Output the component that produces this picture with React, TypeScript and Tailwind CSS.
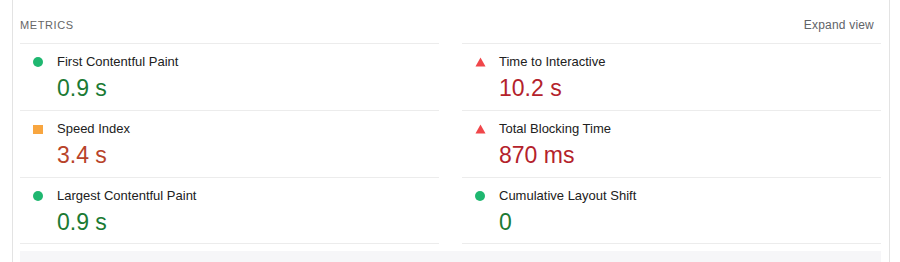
type Rating = "pass" | "average" | "fail";

interface Metric {
  label: string;
  value: string;
  rating: Rating;
}

const metrics: Metric[] = [
  { label: "First Contentful Paint", value: "0.9 s", rating: "pass" },
  { label: "Time to Interactive", value: "10.2 s", rating: "fail" },
  { label: "Speed Index", value: "3.4 s", rating: "average" },
  { label: "Total Blocking Time", value: "870 ms", rating: "fail" },
  { label: "Largest Contentful Paint", value: "0.9 s", rating: "pass" },
  { label: "Cumulative Layout Shift", value: "0", rating: "pass" },
];

const valueColor: Record<Rating, string> = {
  pass: "text-[#1b7a34]",
  average: "text-[#b8432a]",
  fail: "text-[#b4222b]",
};

function RatingIcon({ rating }: { rating: Rating }) {
  if (rating === "pass") {
    return <span className="block h-[10px] w-[10px] rounded-full bg-[#1fb770]" />;
  }
  if (rating === "average") {
    return <span className="block h-[9px] w-[10px] bg-[#f8a640]" />;
  }
  return (
    <svg width="11" height="10" viewBox="0 0 11 10" className="block">
      <polygon points="5.5,0.5 10.5,9.5 0.5,9.5" fill="#f0464a" />
    </svg>
  );
}

function MetricCell({ metric, last }: { metric: Metric; last: boolean }) {
  return (
    <div
      className={`h-[67px] border-t border-[#ececec] pl-[13px] pt-[9px] ${
        last ? "border-b" : ""
      }`}
    >
      <div className="flex h-[18px] items-center">
        <span className="w-[24px]">
          <RatingIcon rating={metric.rating} />
        </span>
        <span className="text-[13px] leading-[18px] text-[#212121]">{metric.label}</span>
      </div>
      <div
        className={`mt-[4px] pl-[24px] text-[23px] leading-[26px] ${valueColor[metric.rating]}`}
      >
        {metric.value}
      </div>
    </div>
  );
}

export default function App() {
  return (
    <div
      className="h-[262px] overflow-hidden bg-white pl-[12px] pr-[10px]"
      style={{ fontFamily: '"Liberation Sans", Arial, sans-serif' }}
    >
      <div className="h-full border-x border-[#e3e3e3] pl-[7px] pr-[8px]">
        <div className="flex h-[43px] items-start justify-between pt-[17px]">
          <span className="text-[11px] leading-4 tracking-[0.6px] text-[#666666] uppercase">
            Metrics
          </span>
          <button className="pr-[7px] text-[12px] leading-4 tracking-[0.2px] text-[#5f6368]">
            Expand view
          </button>
        </div>

        <div className="grid grid-cols-2 gap-x-[23px]">
          {metrics.map((m, i) => (
            <MetricCell key={m.label} metric={m} last={i >= metrics.length - 2} />
          ))}
        </div>

        <div className="mt-[7px] h-[20px] bg-[#f6f6f8]" />
      </div>
    </div>
  );
}
